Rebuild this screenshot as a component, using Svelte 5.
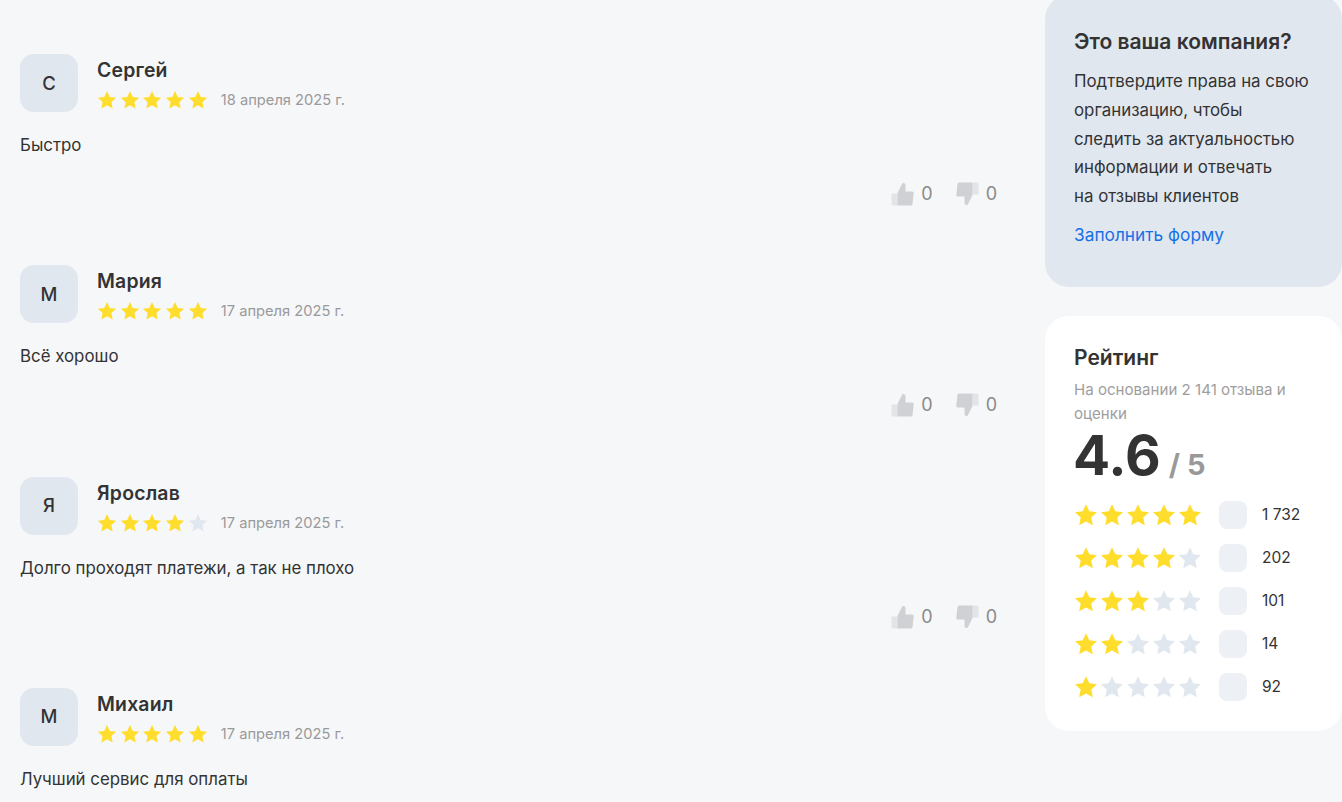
<script>
  const reviews = [
    { initial: "С", name: "Сергей", stars: 5, date: "18 апреля 2025 г.", text: "Быстро" },
    { initial: "М", name: "Мария", stars: 5, date: "17 апреля 2025 г.", text: "Всё хорошо" },
    { initial: "Я", name: "Ярослав", stars: 4, date: "17 апреля 2025 г.", text: "Долго проходят платежи, а так не плохо" },
    { initial: "М", name: "Михаил", stars: 5, date: "17 апреля 2025 г.", text: "Лучший сервис для оплаты" },
  ];
  const rows = [
    { stars: 5, count: "1 732" },
    { stars: 4, count: "202" },
    { stars: 3, count: "101" },
    { stars: 2, count: "14" },
    { stars: 1, count: "92" },
  ];
  const starPath = "M12 1.2l3.3 7.1 7.7.9-5.7 5.3 1.5 7.7L12 18.4l-6.8 3.8 1.5-7.7L1 9.2l7.7-.9z";
</script>

{#snippet starRow(filled, cls)}
  <span class="stars {cls}">
    {#each [1, 2, 3, 4, 5] as n}
      <svg viewBox="0 0 24 24" class:off={n > filled}><path d={starPath} /></svg>
    {/each}
  </span>
{/snippet}

<div class="page">
  <main class="reviews">
    {#each reviews as r}
      <article class="review">
        <header class="head">
          <div class="avatar">{r.initial}</div>
          <div class="who">
            <div class="name">{r.name}</div>
            <div class="meta">
              {@render starRow(r.stars, "small")}
              <span class="date">{r.date}</span>
            </div>
          </div>
        </header>
        <p class="text">{r.text}</p>
        <div class="votes">
          <span class="vote">
            <svg viewBox="0 0 24 24" class="thumb" preserveAspectRatio="none">
              <path class="back" d="M0.5 11.5h7v12h-5a2 2 0 0 1-2-2z" />
              <path class="front" d="M7 10.500l4.200-8c.4-1 1-1.500 1.900-1.500 1.300 0 2 1 2 2.200v6.300h7c1 0 1.700.8 1.600 1.800l-1.200 10.400c-.1 1-.9 1.800-1.900 1.800H7z" />
            </svg>
            <span>0</span>
          </span>
          <span class="vote">
            <svg viewBox="0 0 24 24" class="thumb" preserveAspectRatio="none">
              <path class="back" d="M23.5 12.5h-7v-12h5a2 2 0 0 1 2 2z" />
              <path class="front" d="M17 13.500l-4.200 8c-.4 1-1 1.500-1.900 1.500-1.300 0-2-1-2-2.200v-6.300h-7c-1 0-1.700-.8-1.600-1.800L1.500 2.300C1.600 1.300 2.400.5 3.400.5H17z" />
            </svg>
            <span>0</span>
          </span>
        </div>
      </article>
    {/each}
  </main>

  <aside class="side">
    <section class="card claim">
      <h3>Это ваша компания?</h3>
      <p>Подтвердите права на свою<br />организацию, чтобы<br />следить за актуальностью<br />информации и отвечать<br />на отзывы клиентов</p>
      <span class="link">Заполнить форму</span>
    </section>

    <section class="card rating">
      <h3>Рейтинг</h3>
      <p class="basis">На основании 2 141 отзыва и оценки</p>
      <div class="score"><b>4.6</b> <span>/ 5</span></div>
      <div class="rows">
        {#each rows as row}
          <div class="row">
            {@render starRow(row.stars, "big")}
            <span class="box"></span>
            <span class="count">{row.count}</span>
          </div>
        {/each}
      </div>
    </section>
  </aside>
</div>

<style>
  :global(body) {
    margin: 0;
    background: #f6f7f9;
    overflow: hidden;
  }

  .page {
    height: 802px;
    display: flex;
    overflow: hidden;
    font-family: Inter, "Noto Sans", sans-serif;
    color: #333;
  }

  .reviews {
    width: 977px;
    margin-left: 20px;
    padding-top: 54px;
    flex: none;
  }

  .review {
    height: 211.3px;
  }

  .head {
    display: flex;
    gap: 19px;
  }

  .avatar {
    width: 58px;
    height: 58px;
    border-radius: 14px;
    background: #e1e7ef;
    display: flex;
    align-items: center;
    justify-content: center;
    font-size: 18.5px;
    font-weight: 500;
    padding-bottom: 1px;
    box-sizing: border-box;
  }

  .name {
    font-size: 19.4px;
    font-weight: 600;
    letter-spacing: 0.2px;
    line-height: 22px;
    margin-top: 5px;
  }

  .meta {
    display: flex;
    align-items: center;
    gap: 13px;
    margin-top: 9px;
  }

  .stars {
    display: flex;
  }

  .stars svg {
    display: block;
    fill: #ffdd2d;
  }

  .stars svg.off {
    fill: #e1e7ef;
  }

  .stars.small {
    gap: 2.7px;
  }

  .stars.small svg {
    width: 20px;
    height: 20px;
  }

  .stars.big {
    gap: 2px;
  }

  .stars.big svg {
    width: 24px;
    height: 24px;
  }

  .date {
    font-size: 14.7px;
    color: #9a9a9a;
  }

  .text {
    margin: 23px 0 0;
    font-size: 16.85px;
    line-height: 20px;
    color: #333;
  }

  .votes {
    display: flex;
    justify-content: flex-end;
    gap: 23px;
    margin-top: 27px;
  }

  .vote {
    display: flex;
    align-items: center;
    gap: 7px;
    font-size: 18px;
    line-height: 24px;
    color: #8a8a8a;
  }

  .thumb {
    width: 23px;
    height: 24px;
  }

  .thumb .back {
    fill: #e2e4e6;
  }

  .thumb .front {
    fill: #cfd1d4;
  }

  .side {
    flex: none;
    width: 297px;
    margin-left: 48px;
    margin-top: -5px;
    display: flex;
    flex-direction: column;
    gap: 29px;
  }

  .card {
    border-radius: 24px;
    padding: 0 29px;
    box-sizing: border-box;
  }

  .claim {
    background: #e1e7ef;
    height: 292px;
    padding-top: 33px;
  }

  .claim h3,
  .rating h3 {
    margin: 0;
    font-size: 21px;
    font-weight: 600;
    line-height: 28px;
  }

  .claim p {
    margin: 11px 0 0;
    font-size: 16.85px;
    line-height: 28.8px;
  }

  .link {
    display: block;
    margin-top: 12px;
    font-size: 17.3px;
    line-height: 24px;
    color: #1771e6;
  }

  .rating {
    background: #fff;
    height: 415px;
    padding-top: 28px;
  }

  .basis {
    margin: 6px 0 0;
    font-size: 15.1px;
    line-height: 24px;
    color: #9e9e9e;
  }

  .score {
    display: flex;
    align-items: baseline;
    gap: 8px;
    margin-left: -1px;
    line-height: 58px;
  }

  .score b {
    font-size: 55px;
    font-weight: 700;
  }

  .score span {
    font-size: 29px;
    font-weight: 700;
    color: #999;
  }

  .rows {
    margin-top: -1px;
  }

  .row {
    display: flex;
    align-items: center;
    height: 43px;
  }

  .box {
    width: 28px;
    height: 28px;
    border-radius: 8px;
    background: #edf0f5;
    margin-left: 17px;
  }

  .count {
    margin-left: 15px;
    font-size: 15.5px;
    line-height: 30px;
    color: #333;
  }
</style>
